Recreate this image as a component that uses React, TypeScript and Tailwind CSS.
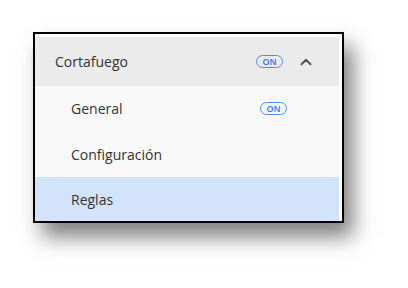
import { ChevronUp } from 'lucide-react';

function OnBadge() {
  return (
    <span className="flex h-[13px] w-[27px] items-center justify-center rounded-full border border-[#4a8cff] text-[9px] font-semibold leading-none text-[#2f74f5]">
      ON
    </span>
  );
}

export default function App() {
  return (
    <div className="h-[288px] w-[408px] bg-white pl-[33px] pt-[32px] font-['Open_Sans',sans-serif]">
      <div className="w-[311px] border-2 border-black bg-white pr-[3px] pt-[3px] shadow-[9px_14px_20px_rgba(0,0,0,0.5)]">
        <div className="flex h-[49px] items-center bg-[#ebebeb] pl-[20px] pr-[24px] text-[14px] text-[#333333]">
          <span className="flex-1">Cortafuego</span>
          <OnBadge />
          <ChevronUp className="ml-[14px] h-[18px] w-[18px] text-[#525252]" strokeWidth={2.5} />
        </div>
        <div className="flex h-[45px] items-center bg-[#f8f8f8] pl-[36px] pr-[52px] text-[14px] text-[#333333]">
          <span className="flex-1">General</span>
          <OnBadge />
        </div>
        <div className="flex h-[46px] items-center bg-[#f8f8f8] pl-[36px] text-[14px] text-[#333333]">
          Configuración
        </div>
        <div className="flex h-[44px] items-center bg-[#d3e3fb] pl-[36px] text-[14px] text-[#333333]">
          Reglas
        </div>
      </div>
    </div>
  );
}
